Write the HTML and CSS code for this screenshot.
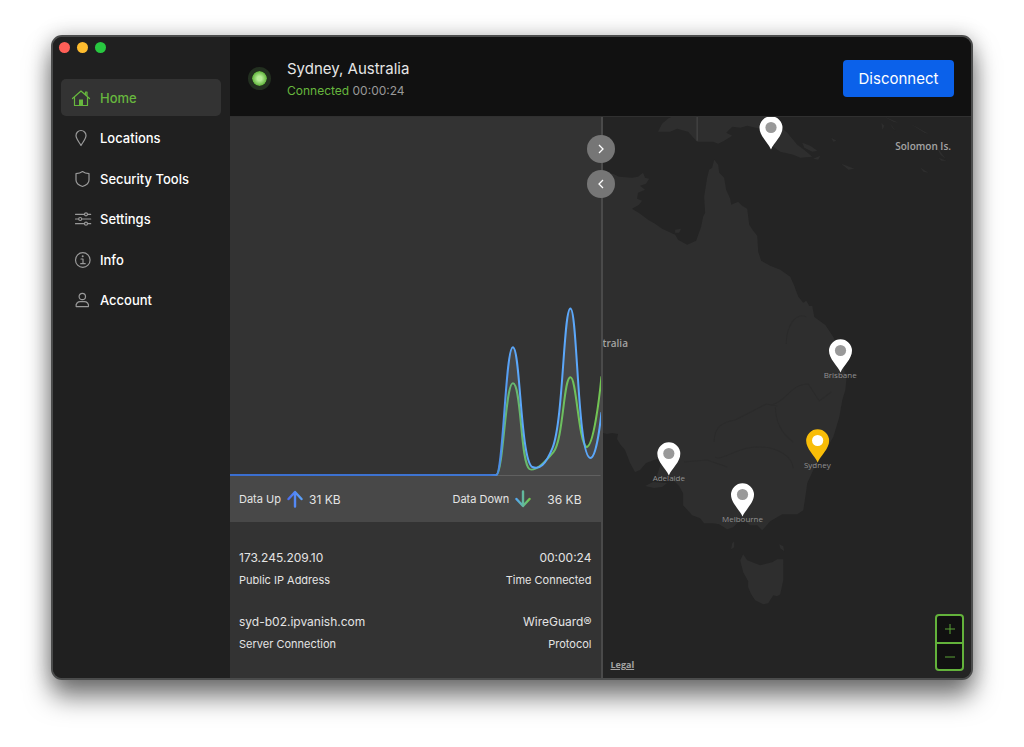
FILE: index.html
```html
<!DOCTYPE html>
<html lang="en">
<head>
<meta charset="utf-8">
<meta name="viewport" content="width=device-width, initial-scale=1">
<title>IPVanish</title>
<link rel="stylesheet" href="styles.css">
</head>
<body>
<div class="window">
  <aside class="sidebar">
    <div class="lights">
      <button class="light light-close" aria-label="Close"></button>
      <button class="light light-min" aria-label="Minimize"></button>
      <button class="light light-zoom" aria-label="Zoom"></button>
    </div>
    <nav class="nav">
      <a class="nav-item active" href="#home">
        <svg class="icon" viewBox="0 0 20 20"><path d="M1.500 10.500 10 3l8.500 7.500M3.500 9v8.500h13V9M14.500 6.500V4H16v4"/><path class="solid" d="M8 11.500h4v6H8z"/></svg>
        <span>Home</span></a>
      <a class="nav-item" href="#locations">
        <svg class="icon" viewBox="0 0 20 20"><path d="M10 17.500C8.500 14.500 5 11 5 7.500a5 5 0 0 1 10 0c0 3.500-3.500 7-5 10z"/></svg>
        <span>Locations</span></a>
      <a class="nav-item" href="#security">
        <svg class="icon" viewBox="0 0 20 20"><path d="M11.500 2.500c2 1.500 4 2 6.500 2.200v6.300c0 3-3.500 5.500-6.500 6.500-3-1-6.500-3.500-6.500-6.500V4.700c2.500-.2 4.500-.7 6.500-2.200z"/></svg>
        <span>Security Tools</span></a>
      <a class="nav-item" href="#settings">
        <svg class="icon" viewBox="0 0 20 20"><path d="M4.500 5.300h9m3.200 0h3M4.500 10h3m3.200 0h9M4.500 14.700h9m3.200 0h3"/><circle cx="15" cy="5.300" r="1.500"/><circle cx="9.200" cy="10" r="1.500"/><circle cx="15" cy="14.700" r="1.500"/></svg>
        <span>Settings</span></a>
      <a class="nav-item" href="#info">
        <svg class="icon" viewBox="0 0 20 20"><circle cx="11.800" cy="10" r="7.300"/><path d="M10 9h2v4.500M9.700 13.700h4.500"/><circle class="solid" cx="11.700" cy="6.300" r="1"/></svg>
        <span>Info</span></a>
      <a class="nav-item" href="#account">
        <svg class="icon" viewBox="0 0 20 20"><circle cx="11.300" cy="6.500" r="3.200"/><path d="M5.200 16.700c-.9-3.200 1.800-5 4-5h4.200c2.200 0 4.900 1.800 4 5z"/></svg>
        <span>Account</span></a>
    </nav>
  </aside>

  <main class="main">
    <header class="header">
      <span class="status-dot"></span>
      <div class="status">
        <h1 class="place">Sydney, Australia</h1>
        <p class="state"><span class="on">Connected</span> <time>00:00:24</time></p>
      </div>
      <button class="disconnect">Disconnect</button>
    </header>

    <div class="content">
      <section class="panel">
        <svg class="chart" viewBox="0 0 370 360" preserveAspectRatio="none" role="img" aria-label="Data usage">
          <defs>
            <linearGradient id="up" gradientUnits="userSpaceOnUse" x1="0" y1="0" x2="370" y2="0"><stop offset="0" stop-color="#3a6ed0"/><stop offset=".7" stop-color="#3f76d2"/><stop offset=".76" stop-color="#5ba7fa"/></linearGradient>
            <linearGradient id="down" gradientUnits="userSpaceOnUse" x1="260" y1="0" x2="370" y2="0"><stop offset="0" stop-color="#63b478"/><stop offset="1" stop-color="#72c552"/></linearGradient>
          </defs>
          <path class="area" d="M266 360C273 357 275 231 282.500 231C290 231 290 345 302 351C309 354 315 349 322 332C333 305 333 192 340 192C346 192 347 305 354 327C356 334 359 332 362 320C366 304 369 280 371 260V360z"/>
          <path class="axis" d="M0 359.500H370"/>
          <path class="line" stroke="url(#down)" d="M266 359C273 357 275 267 282.500 267C291 267 290 347 299 353C304 356 313 348 323 336C333 324 333 261 340 261C346 261 348 326 356 331C363 331 369 281 371 260"/>
          <path class="line" stroke="url(#up)" d="M0 359H266C273 357 275 231 282.500 231C290 231 290 345 302 351C309 354 315 349 322 332C333 305 333 192 340 192C347 192 347 342 360 342C365 342 369 315 371 296"/>
        </svg>
        <div class="traffic">
          <div class="metric"><span class="label">Data Up</span>
            <svg class="arrow" viewBox="0 0 16 18"><defs><linearGradient id="au"><stop offset="0" stop-color="#4c6ff0"/><stop offset="1" stop-color="#5ba2fa"/></linearGradient></defs><path stroke="url(#au)" d="M1.500 9 8 2l6.500 7M8 2.500 8.010 16.500"/></svg>
            <span>31 KB</span></div>
          <div class="metric"><span class="label">Data Down</span>
            <svg class="arrow" viewBox="0 0 16 18"><defs><linearGradient id="ad"><stop offset="0" stop-color="#55a8ee"/><stop offset="1" stop-color="#70c84c"/></linearGradient></defs><path stroke="url(#ad)" d="M1.500 9 8 16l6.500-7M8 15.500 8.010 1.500"/></svg>
            <span class="amount">36 KB</span></div>
        </div>
        <dl class="details">
          <div class="detail"><dd>173.245.209.10</dd><dt>Public IP Address</dt></div>
          <div class="detail end"><dd>00:00:24</dd><dt>Time Connected</dt></div>
          <div class="detail"><dd>syd-b02.ipvanish.com</dd><dt>Server Connection</dt></div>
          <div class="detail end"><dd>WireGuard®</dd><dt>Protocol</dt></div>
        </dl>
      </section>

      <section class="map" aria-label="Server map">
        <svg class="symbols" aria-hidden="true">
          <symbol id="pin" viewBox="0 0 24 34"><path d="M12 33.500C9 26.500.500 20 .500 11.800a11.500 11.500 0 0 1 23 0C23.500 20 15 26.500 12 33.500z"/><circle cx="12" cy="11.500" r="5.600"/></symbol>
        </svg>
        <div class="scene">
          <svg class="land" viewBox="1 0 368 561" preserveAspectRatio="xMidYMid slice" aria-hidden="true">
            <path d="M-3 56L11 57 17 60 30 61 36 60 41 56 43 61 47 62 44 67 38 69 43 73 36 76 35 82 40 84 37 88 30 92 38 97 46 103 53 107 60 112 73 118 76 123 85 128 94 124 99 110 101 100 103 96 102 80 105 61 107 53 110 51 112 43 116 48 117 56 122 61 124 73 128 82 129 88 136 85 140 89 145 92 147 108 151 114 155 119 156 135 159 144 168 149 178 153 188 160 192 169 196 180 201 186 204 184 207 189 210 189 212 200 223 208 231 220 238 235 244 263 243 273 240 283 237 300 231 320 221 337 211 353 205 366 203 380 201 393 195 397 180 397 168 404 160 413 155 408 148 408 143 404 136 405 131 410 125 412 117 407 111 406 102 406 98 401 90 398 81 388 81 376 77 369 73 365 66 360 56 362 55 358 59 346 58 341 52 343 44 346 38 353 33 355 28 346 23 333 18 327 15 322 16 317 10 316 5 317-3 315z"/>
            <path d="M43 369L51 365 65 366 60 370 52 371zM73 113L79 112 77 116 73 116z"/>
            <path d="M138 443L141 437 145 443 158 448 170 445 175 442 181 442 181 463 178 477 175 479 171 478 166 486 161 487 153 483 149 477 146 470 146 464 141 455zM130 426L132 424 132 430 129 432zM177 427L181 429 182 434 178 431z"/>
            <path d="M56 15L60 7 66 2 70 0H171L178 10 185 16 195 28 203 34 210 40 198 41 191 38 178 35 171 30 163 20 158 12 145 9 138 11 130 10 124 16 130 19 122 24 116 27 111 25 95 25 86 15 75 12 68 15z"/>
            <path d="M200 26l8 3 7 5-5 1-8-4zM211 42l7-3-2 4zM229 21l5 3-3 1zM239 47l7 6 6-1-5-2zM279 6l3 3-2 4zM288 7l5 7-3-3zM282 0l14 6-5-1zM308 7l18 10-4-1zM333 28l10 14-5-4zM318 51l8 5-5-1zM336 41l8 3-5 0z"/>
            <path class="boundary" d="M95 0V24"/>
            <path class="region" d="M184 227C184 210 193 195 204 200M169 288C184 285 188 267 206 267L217 284 229 275M173 290C174 305 178 315 191 325M112 325C112 310 120 305 133 303L164 287 175 289M82 345L105 343 125 350M113 340C122 345 137 325 168 331C186 336 190 344 191 351"/>
          </svg>
          <span class="country country-au">tralia</span>
          <span class="country country-sb">Solomon Is.</span>
          <button class="city city-png" aria-label="Port Moresby"><svg class="pin"><use href="#pin"/></svg></button>
          <button class="city city-brisbane"><svg class="pin"><use href="#pin"/></svg><span>Brisbane</span></button>
          <button class="city city-sydney selected"><svg class="pin"><use href="#pin"/></svg><span>Sydney</span></button>
          <button class="city city-adelaide"><svg class="pin"><use href="#pin"/></svg><span>Adelaide</span></button>
          <button class="city city-melbourne"><svg class="pin"><use href="#pin"/></svg><span>Melbourne</span></button>
          <a class="legal" href="#legal">Legal</a>
          <div class="zoom">
            <button aria-label="Zoom in"><svg viewBox="0 0 10 10"><path d="M0 5h10M5 0v10"/></svg></button>
            <button aria-label="Zoom out"><svg viewBox="0 0 10 10"><path d="M0 5h10"/></svg></button>
          </div>
        </div>
        <div class="toggles">
          <button aria-label="Expand panel"><svg viewBox="0 0 10 10"><path d="M3 1l4 4-4 4"/></svg></button>
          <button aria-label="Collapse panel"><svg viewBox="0 0 10 10"><path d="M7 1L3 5l4 4"/></svg></button>
        </div>
      </section>
    </div>
  </main>
</div>
</body>
</html>
```
FILE: styles.css
```css
* { box-sizing: border-box; }

body {
  margin: 0;
  min-height: 100vh;
  display: flex;
  padding: 35px 51px 67px;
  background: #fff;
  color: #e4e4e4;
  font-family: Inter, "Liberation Sans", sans-serif;
  font-size: 12px;
}

button { margin: 0; padding: 0; border: 0; font: inherit; color: inherit; background: none; cursor: pointer; }
a { color: inherit; text-decoration: none; }
h1, p, dl, dd, dt { margin: 0; font-weight: 400; }
svg { display: block; fill: none; }

.window {
  flex: 1;
  display: grid;
  grid-template-columns: 177px 1fr;
  border: 2px solid #4b4c4c;
  border-radius: 11px;
  background: #202020;
  overflow: hidden;
  box-shadow: 0 17px 26px rgba(0, 0, 0, .52), 0 0 20px rgba(0, 0, 0, .22);
}

/* Sidebar */
.sidebar { background: #202020; padding: 5px 0; }
.lights { display: flex; gap: 7px; padding: 0 6px; }
.light { width: 11px; height: 11px; border-radius: 50%; }
.light-close { background: #ff5f57; }
.light-min { background: #febc2e; }
.light-zoom { background: #28c840; }

.nav {
  display: flex;
  flex-direction: column;
  justify-content: space-between;
  height: 240px;
  margin: 26px 9px 0 8px;
}
.nav-item {
  display: flex;
  align-items: center;
  gap: 9px;
  height: 37px;
  padding: 0 10px;
  border-radius: 5px;
  color: #fff;
  font-size: 13px;
  font-weight: 500;
}
.nav-item.active { background: #333; color: #67b73e; }
.icon { width: 20px; height: 20px; overflow: visible; stroke: #999; stroke-width: 1.2; stroke-linejoin: round; stroke-linecap: round; }
.active .icon { stroke: #67b73e; }
.icon .solid { fill: #999; stroke: none; }
.active .icon .solid { fill: #67b73e; }

/* Header */
.main { display: flex; flex-direction: column; min-width: 0; }
.header {
  display: flex;
  align-items: center;
  gap: 16px;
  height: 80px;
  padding: 4px 17px 0 18px;
  background: #111;
  border-bottom: 1px solid #303030;
}
.status-dot {
  width: 23px;
  height: 23px;
  border: 4px solid #233020;
  border-radius: 50%;
  background: radial-gradient(circle closest-side, #b5ec96 30%, #5cb236) padding-box;
}
.status { flex: 1; padding-top: 2px; }
.place { font-size: 15px; line-height: 20px; color: #e6e6e6; }
.state { margin-top: 3px; font-size: 12px; line-height: 18px; color: #999; }
.on { color: #67b73e; }
.disconnect {
  width: 111px;
  height: 37px;
  border-radius: 4px;
  background: #0b61ea;
  color: #fff;
  font-size: 15px;
}

/* Connection panel */
.content { flex: 1; display: grid; grid-template-columns: 1fr 1fr; }
.panel { display: flex; flex-direction: column; min-width: 0; background: #333; }
.chart { flex: 1 1 160px; width: 100%; height: 160px; min-height: 160px; }
.area { fill: #484848; }
.axis { stroke: #606060; }
.line { stroke-width: 2; }
.traffic {
  display: flex;
  justify-content: space-between;
  align-items: center;
  height: 46px;
  padding: 0 19px 0 9px;
  background: #484848;
}
.metric { display: flex; align-items: center; gap: 6px; }
.label { font-size: 11px; }
.arrow { width: 16px; height: 18px; stroke-width: 2.400; stroke-linecap: round; stroke-linejoin: round; }
.amount { margin-left: 10px; }
.details {
  display: grid;
  grid-template-columns: 1fr auto;
  row-gap: 20px;
  padding: 25px 9px 23px;
}
.detail { line-height: 22px; }
.detail dt { font-size: 11px; }
.end { text-align: right; }

/* Map */
.map { position: relative; min-width: 0; border-left: 2px solid #4a4a4a; background: #242424; }
.symbols { position: absolute; width: 0; height: 0; }
.scene { position: relative; height: 100%; overflow: hidden; font-family: "Open Sans", "Noto Sans", sans-serif; }
.land { position: absolute; width: 100%; height: 100%; fill: #2e2e2e; }
.boundary { stroke: #4a4a4a; stroke-width: 1; }
.region { fill: none; stroke: #2b2b2b; }
.country { position: absolute; font-size: 10px; line-height: 14px; font-weight: 600; color: #a4a4a4; }
.country-au { left: 0; top: 39%; }
.country-sb { right: 20px; top: 4%; }

.city {
  position: absolute;
  display: flex;
  flex-direction: column;
  align-items: center;
  transform: translateX(-50%);
  color: #929292;
  font-size: 8px;
  line-height: 12px;
}
.city span { margin-top: -4px; }
.pin { position: relative; z-index: 1; width: 24px; height: 34px; fill: #fff; color: #999; }
#pin circle { fill: currentColor; }
.selected .pin { fill: #f8bd08; color: #fff; }
.city-png { left: 45.6%; top: -1px; }
.city-brisbane { left: 64.5%; top: 39.6%; }
.city-sydney { left: 58.3%; top: 55.6%; }
.city-adelaide { left: 18%; top: 58%; }
.city-melbourne { left: 38%; top: 65.2%; }

.legal { position: absolute; left: 8px; bottom: 7px; font-size: 9px; line-height: 12px; font-weight: 700; color: #a4a4a4; text-decoration: underline; }
.zoom {
  position: absolute;
  right: 7px;
  bottom: 7px;
  width: 29px;
  border: 2px solid #63b23b;
  border-radius: 4px;
  background: #111;
}
.zoom button { display: grid; place-items: center; width: 100%; height: 26px; }
.zoom button + button { height: 27px; border-top: 2px solid #63b23b; }
.zoom svg { width: 10px; height: 10px; stroke: #5aa337; }

.toggles { position: absolute; left: -16px; top: 18px; display: grid; gap: 7px; }
.toggles button { display: grid; place-items: center; width: 28px; height: 28px; border-radius: 50%; background: #767676; }
.toggles svg { width: 10px; height: 10px; stroke: #fff; stroke-width: 1.300; }
```
